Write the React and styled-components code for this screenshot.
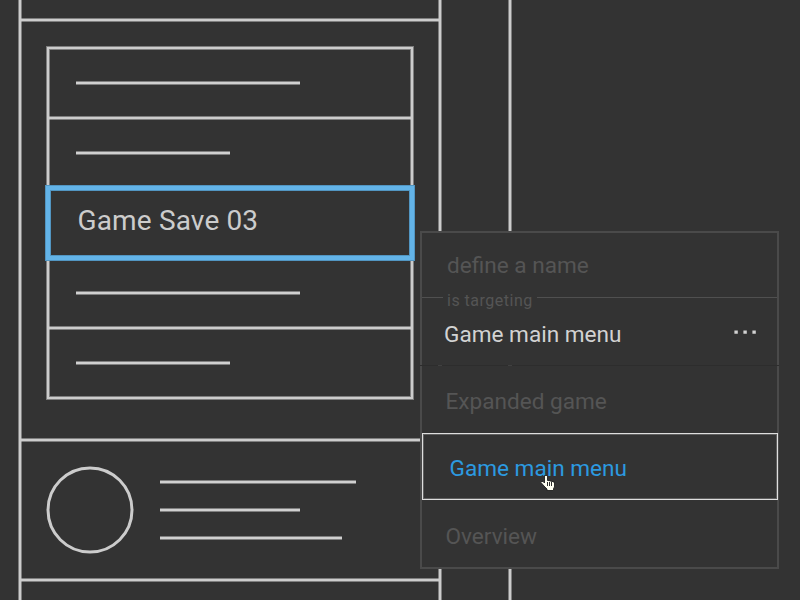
import React from 'react';
import styled, { createGlobalStyle } from 'styled-components';

const line = '#cccccc';
const soft = 'rgba(204, 204, 204, 0.5)';
const ground = '#333333';

const GlobalStyle = createGlobalStyle`
  * { box-sizing: border-box; }
  body { margin: 0; background: ${ground}; font-family: Roboto, sans-serif; }
`;

const Canvas = styled.main`
  position: relative;
  display: flex;
  width: 800px;
  height: 600px;
  overflow: hidden;
  background: ${ground};
`;

const Screen = styled.section`
  display: flex;
  flex-direction: column;
  flex: none;
  width: 422px;
  height: 620px;
  margin: -10px 0 0 19px;
  border: 2px solid ${line};
  box-shadow: 0 0 0 1px ${soft}, inset 0 0 0 1px ${soft};
`;

const Gutter = styled.div`
  flex: none;
  width: 2px;
  height: 600px;
  margin-left: 68px;
  background: ${line};
  box-shadow: 0 0 0 1px ${soft};
`;

const Rule = styled.div`
  flex: none;
  height: 2px;
  background: ${line};
  box-shadow: 0 0 0 1px ${soft};
`;

const Header = styled.div`
  flex: none;
  height: 27px;
`;

const Body = styled.div`
  flex: none;
  height: 418px;
  padding: 26px;
`;

const SaveList = styled.div`
  height: 352px;
  border: 2px solid ${line};
  box-shadow: 0 0 0 1px ${soft}, inset 0 0 0 1px ${soft};
`;

const SaveRow = styled.div`
  display: flex;
  align-items: center;
  height: 68px;
  padding-left: 27px;
`;

const SelectedRow = styled(SaveRow)`
  position: relative;
  height: 74px;
  margin: -1px -3px;
  padding: 0 0 4px 27.5px;
  border: 4px solid #63b4e8;
  box-shadow: 0 0 0 1px #5296c2, inset 0 0 0 1px #5296c2;
  background: ${ground};
  color: ${line};
  font-size: 28px;
  line-height: 32px;
  letter-spacing: 0.15px;
`;

const Bar = styled.div`
  width: ${(p) => p.$width}px;
  height: 4px;
  border: solid #808080;
  border-width: 1px 0;
  background: #d0d0d0;
`;

const Profile = styled.div`
  display: flex;
  flex: none;
  align-items: center;
  height: 138px;
  padding-left: 25px;
`;

const Avatar = styled.svg`
  width: 88px;
  height: 88px;
  fill: none;
  stroke: ${line};
  stroke-width: 3;
`;

const ProfileLines = styled.div`
  display: flex;
  flex-direction: column;
  gap: 24px;
  margin-left: 26px;
`;

const Popup = styled.aside`
  position: absolute;
  left: 420px;
  top: 231px;
  display: flex;
  flex-direction: column;
  width: 359px;
  height: 338px;
  border: 2px solid #4a4a4a;
  background: ${ground};
  color: #555555;
  font-size: 22.6px;
  line-height: 28px;
`;

const NameField = styled.div`
  display: flex;
  flex: none;
  align-items: center;
  height: 64px;
  padding: 1px 0 0 25px;
`;

const Legend = styled.div`
  display: flex;
  flex: none;
  height: 18px;
  font-size: 16px;
  line-height: 18px;
  white-space: nowrap;
`;

const LegendRule = styled.span`
  flex: ${(p) => (p.$lead ? 'none' : '1')};
  width: ${(p) => (p.$lead ? '21px' : 'auto')};
  height: 1px;
  background: #505050;
`;

const LegendText = styled.span`
  width: 94px;
  margin-top: -5px;
  padding-left: 4px;
  letter-spacing: 0.5px;
`;

const Target = styled.div`
  display: flex;
  flex: none;
  align-items: center;
  justify-content: space-between;
  height: 38px;
  padding: 2px 20px 0 22px;
  color: #d2d2d2;
`;

const Dots = styled.svg`
  width: 23px;
  height: 4px;
  margin-bottom: 6px;
  fill: #d2d2d2;
`;

const Seam = styled.div`
  display: flex;
  flex: none;
  gap: 66px;
  height: 1px;
  margin: 12px -2px 0;
  padding-left: 18px;
  background: #2d2d2d;
`;

const SeamMark = styled.span`
  width: 4px;
  height: 1px;
  background: #404040;
`;

const Option = styled.div`
  display: flex;
  flex: none;
  align-items: center;
  height: 67px;
  padding: ${(p) => p.$drop || 0}px 0 0 23.5px;
`;

const ActiveOption = styled(Option)`
  width: 356px;
  padding-left: 26.5px;
  border: 1px solid #dedede;
  box-shadow: inset 0 0 0 1px #606060;
  color: #2c9ae0;
`;

const Label = styled.span`
  letter-spacing: ${(p) => p.$track || 0}px;
`;

const Cursor = styled.svg`
  position: absolute;
  left: 540px;
  top: 474px;
  width: 16px;
  height: 18px;
`;

export default function App() {
  return (
    <>
      <GlobalStyle />
      <Canvas>
        <Screen>
          <Header />
          <Rule />
          <Body>
            <SaveList>
              <SaveRow><Bar $width={224} /></SaveRow>
              <Rule />
              <SaveRow><Bar $width={154} /></SaveRow>
              <SelectedRow>Game Save 03</SelectedRow>
              <SaveRow><Bar $width={224} /></SaveRow>
              <Rule />
              <SaveRow><Bar $width={154} /></SaveRow>
            </SaveList>
          </Body>
          <Rule />
          <Profile>
            <Avatar viewBox="0 0 88 88"><circle cx="44" cy="44" r="42" /></Avatar>
            <ProfileLines>
              <Bar $width={196} />
              <Bar $width={140} />
              <Bar $width={182} />
            </ProfileLines>
          </Profile>
          <Rule />
        </Screen>
        <Gutter />
        <Popup>
          <NameField><Label>define a name</Label></NameField>
          <Legend>
            <LegendRule $lead />
            <LegendText>is targeting</LegendText>
            <LegendRule />
          </Legend>
          <Target>
            <Label>Game main menu</Label>
            <Dots viewBox="0 0 23 4">
              <path d="M.4 .5h3.4v3.3H.4zM9.4 .5h3.4v3.3H9.4zM18.4 .5h3.4v3.3h-3.4z" />
            </Dots>
          </Target>
          <Seam><SeamMark /><SeamMark /></Seam>
          <Option $drop={5}><Label>Expanded game</Label></Option>
          <ActiveOption $drop={4}><Label>Game main menu</Label></ActiveOption>
          <Option $drop={6}><Label>Overview</Label></Option>
        </Popup>
        <Cursor viewBox="0 0 16 18">
          <path
            d="M4.5 1.5h3v5h2v.5h2v.5h1.5v.5h1.5v5l-1 1.5v2H7v-1.5l-3-3-3.5-4V7.5H3l1.5 1.5z"
            fill="#fffff2"
            stroke="#202020"
            strokeWidth="0.9"
          />
          <path d="M7.5 8v4M9.5 8v4M11.5 8v4" stroke="#303030" />
        </Cursor>
      </Canvas>
    </>
  );
}
